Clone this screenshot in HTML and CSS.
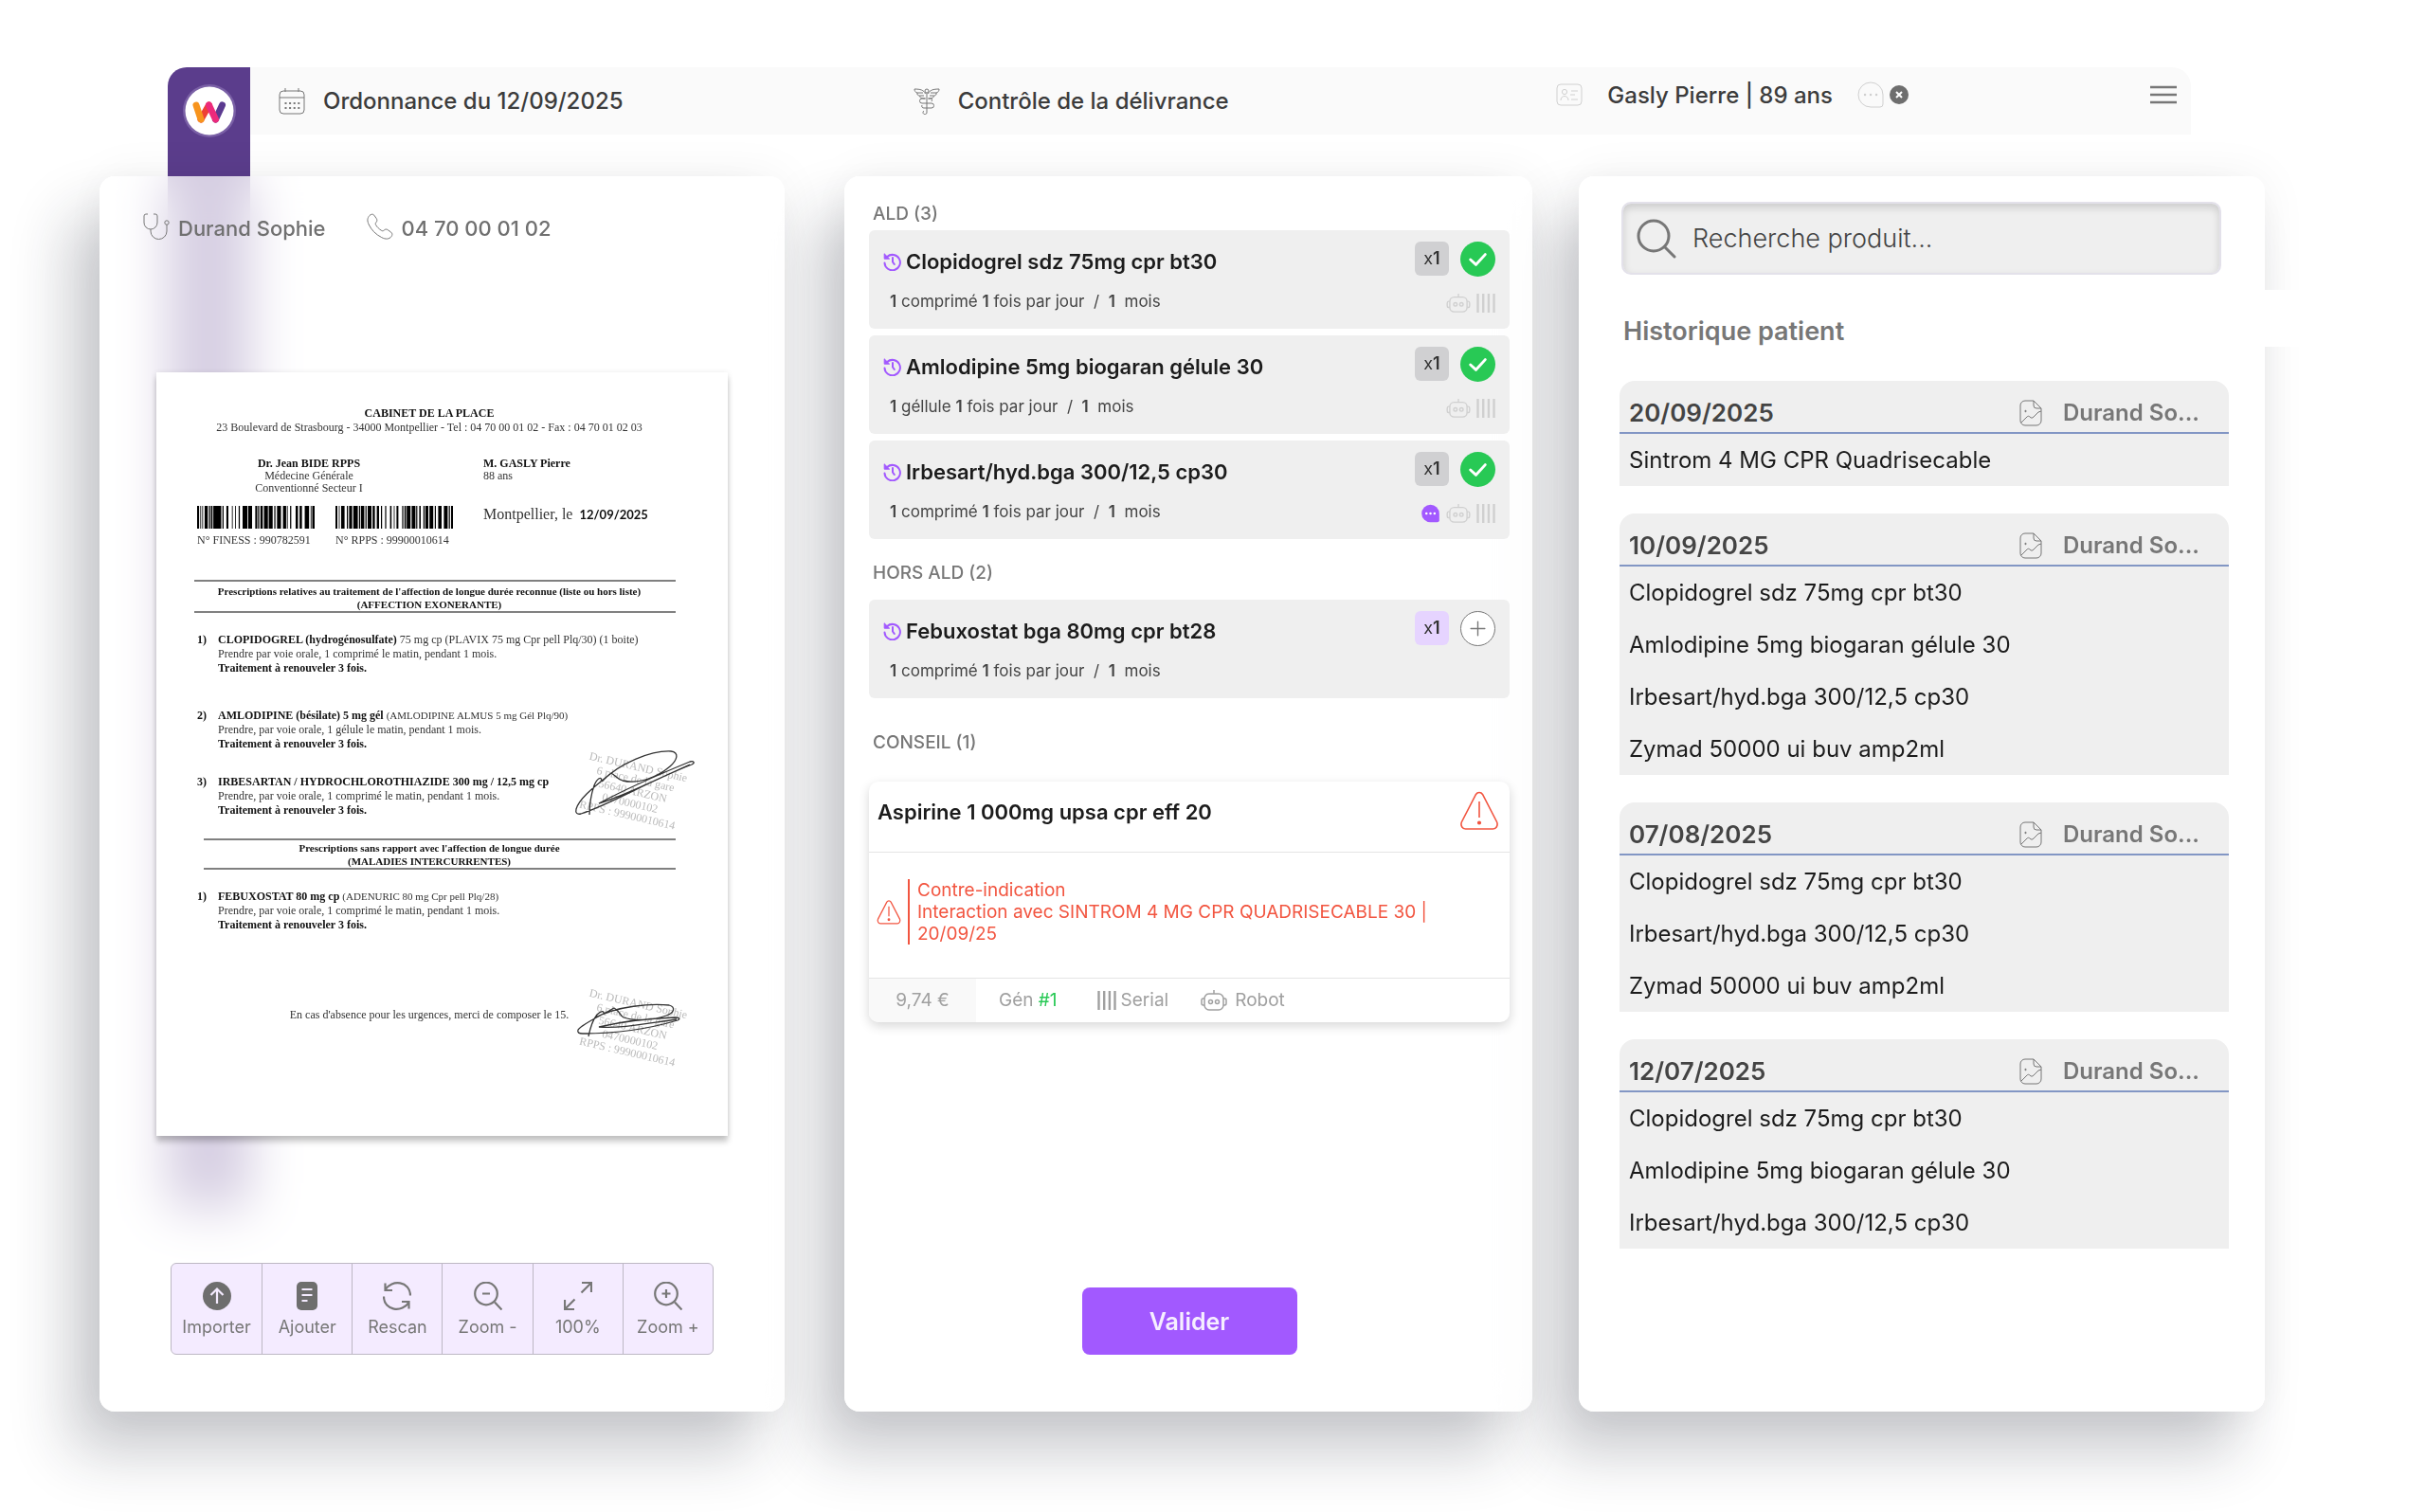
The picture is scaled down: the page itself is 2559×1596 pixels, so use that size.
FILE: index.html
```html
<!DOCTYPE html>
<html lang="fr">
<head>
  <meta charset="utf-8">
  <title>Contrôle de la délivrance</title>
  <link rel="stylesheet" href="styles.css">
</head>
<body>

  <!-- icons -->
  <svg class="sprite" aria-hidden="true">
    <symbol id="i-calendar" viewBox="0 0 28 28">
      <rect x="1" y="3" width="26" height="24" rx="4"/>
      <path d="M1 10h26M7 0v4M21 0v4"/>
      <path d="M6.500 16h16M6.500 21h16" stroke-dasharray="2 2.600" stroke-width="2"/>
    </symbol>
    <symbol id="i-caduceus" viewBox="0 0 28 28">
      <path d="M12.500 6C11 2 7 1 1 1c0 2 1 3.500 3 4-.5 1.500.5 3 2.500 3 0 2 2 3 6 3M15.500 6C17 2 21 1 27 1c0 2-1 3.500-3 4 .5 1.500-.5 3-2.500 3 0 2-2 3-6 3M4 5h6M6.500 8H11M24 5h-6M21.500 8H17"/>
      <circle cx="14" cy="3" r="2"/>
      <path d="M14 5v21M12.500 11H9a2.500 2.500 0 0 0 0 5h10a2.500 2.500 0 0 1 0 5h-8M15.500 11H19a2.500 2.500 0 0 1 0 3M9 18a2 2 0 0 0 2 3M11 24a2 2 0 1 0 3 2"/>
    </symbol>
    <symbol id="i-idcard" viewBox="0 0 28 24">
      <rect x="1" y="1" width="26" height="22" rx="4"/>
      <circle cx="9" cy="9" r="2.600"/>
      <path d="M5 18c0-6 8-6 8 0M16 8h7M15 12h5M16 17h7"/>
    </symbol>
    <symbol id="i-chat" viewBox="0 0 28 28">
      <path d="M14 1a13 13 0 1 0 0 26h10a3 3 0 0 0 3-3V14A13 13 0 0 0 14 1z"/>
      <path d="M8 14h.1M14 14h.1M20 14h.1" stroke-width="2.400" stroke-linecap="round"/>
    </symbol>
    <symbol id="i-chat-full" viewBox="0 0 28 28">
      <path d="M14 1a13 13 0 1 0 0 26h10a3 3 0 0 0 3-3V14A13 13 0 0 0 14 1z" fill="#a259ff" stroke="none"/>
      <path d="M8 14h.1M14 14h.1M20 14h.1" stroke="#fff" stroke-width="3.400" stroke-linecap="round"/>
    </symbol>
    <symbol id="i-stethoscope" viewBox="0 0 28 28">
      <path d="M5 1H3a2 2 0 0 0-2 2v7a7 7 0 0 0 14 0V3a2 2 0 0 0-2-2h-2M8 17v2a8.500 8.500 0 0 0 17 0v-7"/>
      <circle cx="25" cy="10" r="2.200"/>
    </symbol>
    <symbol id="i-phone" viewBox="0 0 28 28">
      <path d="M3 2.500C4.500 1 6.500.6 7.800 2.200l2.400 3.400c1 1.500.8 2.800-.2 4-1 1.100-1 1.900-.3 3 1.500 2.300 3.200 4 5.600 5.600 1.200.8 2 .8 3-.2 1.300-1.200 2.500-1.300 4-.3l3.400 2.500c1.600 1.200 1.500 3 .2 4.600-2.300 2.800-6 3-10.200.8C9.500 22.500 5 17.800 2.200 12 .2 8 .6 5 3 2.500z"/>
    </symbol>
    <symbol id="i-history" viewBox="0 0 20 20">
      <path d="M4.200 5A8.200 8.200 0 1 1 1.500 11.500M10 6v4.500l1.800 2.500" stroke-linecap="round"/>
      <path d="M1.200 1.800v5.400h5.400z" fill="currentColor" stroke-width="1" stroke-linejoin="round"/>
    </symbol>
    <symbol id="i-robot" viewBox="0 0 28 22">
      <rect x="4" y="4" width="20" height="17" rx="5"/>
      <path d="M14 0v4M4 9H2.500C1.500 9 1 9.700 1 11v3c0 1.300.5 2 1.500 2H4M24 9h1.500c1 0 1.500.7 1.500 2v3c0 1.300-.5 2-1.500 2H24"/>
      <circle cx="10.500" cy="12.500" r="2"/>
      <circle cx="17.500" cy="12.500" r="2"/>
    </symbol>
    <symbol id="i-bars" viewBox="0 0 20 20">
      <path d="M1.500 0v20M7.200 0v20M12.900 0v20M18.500 0v20" stroke-width="2.400"/>
    </symbol>
    <symbol id="i-warning" viewBox="0 0 42 42">
      <path d="M17.500 3.500c1.600-2.600 5.400-2.600 7 0l15 29c1.600 3.500-.5 7.500-4 7.500h-29C3 40 .9 36 2.500 32.500z"/>
      <path d="M21 11v17"/>
      <circle cx="21" cy="33.500" r="1.300" fill="currentColor"/>
    </symbol>
    <symbol id="i-search" viewBox="0 0 42 42">
      <circle cx="18" cy="18" r="16"/>
      <path d="M29.500 29.500L40 40" stroke-linecap="round"/>
    </symbol>
    <symbol id="i-file" viewBox="0 0 24 28">
      <path d="M15 1H6a5 5 0 0 0-5 5v16a5 5 0 0 0 5 5h12a5 5 0 0 0 5-5V9zM15 1v5a3 3 0 0 0 3 3h5"/>
      <path d="M2 24l6-6c1-1 2-1 3 0 1.500 1.500 2.500 1.500 4 0l5-5 3-1"/>
      <circle cx="6.500" cy="12" r=".7" fill="currentColor"/>
    </symbol>
  </svg>

  <div class="ribbon">
    <svg class="logo" viewBox="-28 -28 56 56" role="img" aria-label="Logo">
      <circle r="28" fill="#7a60a6"/>
      <circle r="25.500" fill="#fff"/>
      <g fill="none" stroke-width="7" stroke-linecap="round">
        <path d="M6.500 9L13.500-6" stroke="#5b3a90"/>
        <path d="M-9 9L-.5-6" stroke="#ee4036"/>
        <path d="M-14-6L-9 9" stroke="#f7941d"/>
        <path d="M-.5-6L6.500 9" stroke="#ec2a7b"/>
      </g>
    </svg>
  </div>

  <header class="topbar">
    <div class="topbar-title">
      <svg class="ico"><use href="#i-calendar"/></svg>
      <span>Ordonnance du 12/09/2025</span>
    </div>
    <h1 class="topbar-title">
      <svg class="ico"><use href="#i-caduceus"/></svg>
      <span>Contrôle de la délivrance</span>
    </h1>
    <div class="patient">
      <svg class="ico ico-pale"><use href="#i-idcard"/></svg>
      <span class="patient-name">Gasly Pierre | 89 ans</span>
      <svg class="ico ico-pale"><use href="#i-chat"/></svg>
      <button class="close" aria-label="Fermer">
        <svg viewBox="0 0 20 20"><path d="M7 7l6 6M13 7l-6 6"/></svg>
      </button>
    </div>
    <button class="burger" aria-label="Menu">
      <svg viewBox="0 0 28 20"><path d="M0 2h28M0 10h28M0 18h28"/></svg>
    </button>
  </header>

  <main class="columns">

    <!-- ordonnance -->
    <section class="panel panel-scan">
      <div class="contacts">
        <span class="contact"><svg class="ico"><use href="#i-stethoscope"/></svg>Durand Sophie</span>
        <span class="contact"><svg class="ico"><use href="#i-phone"/></svg>04 70 00 01 02</span>
      </div>

      <article class="paper">
        <div class="centered">
          <b>CABINET DE LA PLACE</b><br>
          23 Boulevard de Strasbourg - 34000 Montpellier - Tel : 04 70 00 01 02 - Fax : 04 70 01 02 03
        </div>
        <div class="people">
          <div>
            <p class="doctor"><b>Dr. Jean BIDE RPPS</b><br>Médecine Générale<br>Conventionné Secteur I</p>
            <div class="barcodes">
              <figure>
                <svg viewBox="143 0 297 24" preserveAspectRatio="none"><path d="M143 0h5v24h-5zM151 0h2v24h-2zM156 0h2v24h-2zM162 0h8v24h-8zM173 0h3v24h-3zM178 0h4v24h-4zM184 0h20v24h-20zM207 0h3v24h-3zM217 0h5v24h-5zM231 0h2v24h-2zM239 0h2v24h-2zM248 0h3v24h-3zM258 0h12v24h-12zM272 0h10v24h-10zM290 0h5v24h-5zM297 0h3v24h-3zM303 0h6v24h-6zM312 0h10v24h-10zM324 0h10v24h-10zM338 0h3v24h-3zM345 0h10v24h-10zM360 0h8v24h-8zM370 0h2v24h-2zM378 0h3v24h-3zM392 0h6v24h-6zM402 0h6v24h-6zM415 0h11v24h-11zM430 0h2v24h-2zM434 0h6v24h-6z"/></svg>
                <figcaption>N° FINESS : 990782591</figcaption>
              </figure>
              <figure>
                <svg viewBox="496 0 310 24" preserveAspectRatio="none"><path d="M496 0h5v24h-5zM505 0h2v24h-2zM511 0h9v24h-9zM526 0h3v24h-3zM532 0h8v24h-8zM543 0h12v24h-12zM558 0h3v24h-3zM563 0h9v24h-9zM575 0h3v24h-3zM581 0h10v24h-10zM594 0h6v24h-6zM605 0h6v24h-6zM616 0h3v24h-3zM627 0h3v24h-3zM640 0h4v24h-4zM650 0h2v24h-2zM657 0h5v24h-5zM672 0h3v24h-3zM678 0h4v24h-4zM684 0h10v24h-10zM697 0h10v24h-10zM709 0h3v24h-3zM717 0h4v24h-4zM728 0h3v24h-3zM733 0h8v24h-8zM744 0h10v24h-10zM758 0h3v24h-3zM767 0h9v24h-9zM782 0h10v24h-10zM795 0h3v24h-3zM801 0h5v24h-5z"/></svg>
                <figcaption>N° RPPS : 99900010614</figcaption>
              </figure>
            </div>
          </div>
          <div>
            <p class="small"><b>M. GASLY Pierre</b><br>88 ans</p>
            <p class="place">Montpellier, le <b>12/09/2025</b></p>
          </div>
        </div>

        <h3 class="rule">Prescriptions relatives au traitement de l'affection de longue durée reconnue (liste ou hors liste)<br>(AFFECTION EXONERANTE)</h3>
        <ol class="lines">
          <li class="wide"><b>CLOPIDOGREL (hydrogénosulfate)</b> 75 mg cp (PLAVIX 75 mg Cpr pell Plq/30) (1 boite)<br>Prendre par voie orale, 1 comprimé le matin, pendant 1 mois.<br><b>Traitement à renouveler 3 fois.</b></li>
          <li><b>AMLODIPINE (bésilate) 5 mg gél</b> <small>(AMLODIPINE ALMUS 5 mg Gél Plq/90)</small><br>Prendre, par voie orale, 1 gélule le matin, pendant 1 mois.<br><b>Traitement à renouveler 3 fois.</b></li>
          <li><b>IRBESARTAN / HYDROCHLOROTHIAZIDE 300 mg / 12,5 mg cp</b><br>Prendre, par voie orale, 1 comprimé le matin, pendant 1 mois.<br><b>Traitement à renouveler 3 fois.</b></li>
        </ol>
        <h3 class="rule rule-tight">Prescriptions sans rapport avec l'affection de longue durée<br>(MALADIES INTERCURRENTES)</h3>
        <ol class="lines">
          <li><b>FEBUXOSTAT 80 mg cp</b> <small>(ADENURIC 80 mg Cpr pell Plq/28)</small><br>Prendre, par voie orale, 1 comprimé le matin, pendant 1 mois.<br><b>Traitement à renouveler 3 fois.</b></li>
        </ol>
        <p class="centered urgent">En cas d'absence pour les urgences, merci de composer le 15.</p>

        <div class="stamp stamp-top">
          <p>Dr. DURAND Sophie<br>6 place de la gare<br>56640 ARZON<br>0470000102<br>RPPS : 99900010614</p>
          <svg viewBox="0 0 130 72"><path d="M18 69c0-12 2-22 5-31 3-7 8-11 8-4M31 34C50 14 84 1 104 2c9 1 7 9-1 16-14 12-34 19-50 15-6-2-8-6-12-8C28 36 8 50 4 63c-1 4 1 6 5 5C40 58 80 34 126 16c4-2 2-4-2-3C90 27 58 41 28 57c25-7 62-26 96-41"/></svg>
        </div>
        <div class="stamp stamp-bottom">
          <p>Dr. DURAND Sophie<br>6 place de la gare<br>56640 ARZON<br>0470000102<br>RPPS : 99900010614</p>
          <svg viewBox="0 0 130 72"><path d="M17 53c2-10 5-18 9-23 4-4 8-5 7 0M24 33c24-12 58-15 78-13 7 2 6 8-3 11-14 5-34 6-45 2-4-2-5-8-10-10C30 31 10 40 6 46c-1 3 1 4 5 4 32 0 66-4 100-14 4-2 1-3-3-3-28 1-54 4-80 10 22 2 52-4 82-8"/></svg>
        </div>
      </article>

      <div class="tools">
        <button><svg viewBox="0 0 30 30"><circle cx="15" cy="15" r="15" class="solid"/><path class="light" d="M15 23V8M8.500 14L15 7.500l6.500 6.500"/></svg>Importer</button>
        <button><svg viewBox="0 0 30 30"><rect x="4" y="0" width="22" height="30" rx="5" class="solid"/><path class="light" d="M9.500 8h11M9.500 14h11M9.500 20h6"/></svg>Ajouter</button>
        <button><svg viewBox="0 0 30 30"><path d="M2.500 1.500v7.500h7.500M2.500 8.500C9-3 29-1 29 14.500M27.500 28.500V21H20M27.500 21.500C21 33 1 31 1 15.500"/></svg>Rescan</button>
        <button><svg viewBox="0 0 30 30"><circle cx="13" cy="12.500" r="11.800"/><path d="M9 12.500h8M22 21.500l7.500 8"/></svg>Zoom -</button>
        <button><svg viewBox="0 0 30 30"><path d="M19 1h10v10M29 1L18.500 11.500M1 19v10h10M1 29l10.500-10.500"/></svg>100%</button>
        <button><svg viewBox="0 0 30 30"><circle cx="13" cy="12.500" r="11.800"/><path d="M8.500 12.500h9M13 8v9M22 21.500l7.500 8"/></svg>Zoom +</button>
      </div>
    </section>

    <!-- délivrance -->
    <section class="panel panel-delivery">
      <h2>ALD (3)</h2>
      <ul class="drugs">
        <li class="drug">
          <div>
            <h3><svg><use href="#i-history"/></svg>Clopidogrel sdz 75mg cpr bt30</h3>
            <p><b>1</b> comprimé <b>1</b> fois par jour &nbsp;/&nbsp; <b>1</b>&nbsp; mois</p>
          </div>
          <div>
            <div class="actions"><span class="qty">x<b>1</b></span><button class="check" aria-label="Validé"><svg viewBox="0 0 38 38"><path d="M11 19.500l6 5.500 10-11"/></svg></button></div>
            <div class="flags"><svg><use href="#i-robot"/></svg><svg class="bars"><use href="#i-bars"/></svg></div>
          </div>
        </li>
        <li class="drug">
          <div>
            <h3><svg><use href="#i-history"/></svg>Amlodipine 5mg biogaran gélule 30</h3>
            <p><b>1</b> géllule <b>1</b> fois par jour &nbsp;/&nbsp; <b>1</b>&nbsp; mois</p>
          </div>
          <div>
            <div class="actions"><span class="qty">x<b>1</b></span><button class="check" aria-label="Validé"><svg viewBox="0 0 38 38"><path d="M11 19.500l6 5.500 10-11"/></svg></button></div>
            <div class="flags"><svg><use href="#i-robot"/></svg><svg class="bars"><use href="#i-bars"/></svg></div>
          </div>
        </li>
        <li class="drug">
          <div>
            <h3><svg><use href="#i-history"/></svg>Irbesart/hyd.bga 300/12,5 cp30</h3>
            <p><b>1</b> comprimé <b>1</b> fois par jour &nbsp;/&nbsp; <b>1</b>&nbsp; mois</p>
          </div>
          <div>
            <div class="actions"><span class="qty">x<b>1</b></span><button class="check" aria-label="Validé"><svg viewBox="0 0 38 38"><path d="M11 19.500l6 5.500 10-11"/></svg></button></div>
            <div class="flags"><svg class="bubble"><use href="#i-chat-full"/></svg><svg><use href="#i-robot"/></svg><svg class="bars"><use href="#i-bars"/></svg></div>
          </div>
        </li>
      </ul>

      <h2 class="hors-ald">HORS ALD (2)</h2>
      <ul class="drugs">
        <li class="drug">
          <div>
            <h3><svg><use href="#i-history"/></svg>Febuxostat bga 80mg cpr bt28</h3>
            <p><b>1</b> comprimé <b>1</b> fois par jour &nbsp;/&nbsp; <b>1</b>&nbsp; mois</p>
          </div>
          <div>
            <div class="actions"><span class="qty qty-new">x<b>1</b></span><button class="check add" aria-label="Ajouter"><svg viewBox="0 0 38 38"><path d="M11 19h16M19 11v16"/></svg></button></div>
            <div class="flags"></div>
          </div>
        </li>
      </ul>

      <h2 class="conseil">CONSEIL (1)</h2>
      <article class="advice">
        <div class="advice-head">
          <h3>Aspirine 1 000mg upsa cpr eff 20</h3>
          <svg><use href="#i-warning"/></svg>
        </div>
        <div class="advice-body">
          <svg><use href="#i-warning"/></svg>
          <p>Contre-indication<br>Interaction avec SINTROM 4 MG CPR QUADRISECABLE 30 | 20/09/25</p>
        </div>
        <div class="advice-foot">
          <span class="price">9,74 €</span>
          <span>Gén <em>#1</em></span>
          <span class="with-icon"><svg class="bars"><use href="#i-bars"/></svg>Serial</span>
          <span class="with-icon robot"><svg><use href="#i-robot"/></svg>Robot</span>
        </div>
      </article>

      <button class="submit">Valider</button>
    </section>

    <!-- historique -->
    <section class="panel panel-history">
      <div class="search">
        <label for="search" aria-label="Recherche produit"><svg><use href="#i-search"/></svg></label>
        <input id="search" type="text" placeholder="Recherche produit...">
      </div>
      <h2>Historique patient</h2>

      <div class="entries">
        <article class="entry">
          <header><time>20/09/2025</time><svg><use href="#i-file"/></svg><span>Durand So...</span></header>
          <ul><li>Sintrom 4 MG CPR Quadrisecable</li></ul>
        </article>
        <article class="entry">
          <header><time>10/09/2025</time><svg><use href="#i-file"/></svg><span>Durand So...</span></header>
          <ul>
            <li>Clopidogrel sdz 75mg cpr bt30</li>
            <li>Amlodipine 5mg biogaran gélule 30</li>
            <li>Irbesart/hyd.bga 300/12,5 cp30</li>
            <li>Zymad 50000 ui buv amp2ml</li>
          </ul>
        </article>
        <article class="entry">
          <header><time>07/08/2025</time><svg><use href="#i-file"/></svg><span>Durand So...</span></header>
          <ul>
            <li>Clopidogrel sdz 75mg cpr bt30</li>
            <li>Irbesart/hyd.bga 300/12,5 cp30</li>
            <li>Zymad 50000 ui buv amp2ml</li>
          </ul>
        </article>
        <article class="entry">
          <header><time>12/07/2025</time><svg><use href="#i-file"/></svg><span>Durand So...</span></header>
          <ul>
            <li>Clopidogrel sdz 75mg cpr bt30</li>
            <li>Amlodipine 5mg biogaran gélule 30</li>
            <li>Irbesart/hyd.bga 300/12,5 cp30</li>
          </ul>
        </article>
      </div>
    </section>

  </main>
</body>
</html>
```
FILE: styles.css
```css
* {
  box-sizing: border-box;
}
body {
  margin: 0;
  min-height: 100vh;
  padding: 71px 0 106px;
  display: flex;
  flex-direction: column;
  background: #fff;
  color: #1c1c1c;
  font-family: Inter, "Liberation Sans", sans-serif;
  position: relative;
}
h1, h2, h3, p, ul, ol, figure {
  margin: 0;
  padding: 0;
  font-size: inherit;
  font-weight: inherit;
}
ul, ol {
  list-style: none;
}
button, input {
  font: inherit;
  color: inherit;
  padding: 0;
  border: none;
  background: none;
}
button {
  cursor: pointer;
}
svg {
  display: block;
  flex: none;
  fill: none;
  stroke: currentColor;
}
b {
  font-weight: 600;
}
.sprite {
  position: absolute;
  width: 0;
  height: 0;
}

/* purple ribbon, runs behind the first panel */
.ribbon {
  position: absolute;
  top: 71px;
  left: 177px;
  width: 87px;
  height: calc(100vh - 392px);
  padding-top: 18px;
  border-radius: 20px 0 0 0;
  background: #5b3d8c;
}
.logo {
  width: 56px;
  margin: 0 auto;
  stroke: none;
}

/* top bar */
.topbar {
  display: grid;
  grid-template-columns: 670fr 679fr 627fr auto;
  margin: 0 247px 44px 177px;
  padding: 0 15px 0 117px;
  height: 71px;
  background: #fafafa;
  border-radius: 20px 20px 0 0;
  color: #3c3c3c;
  font-size: 24px;
  font-weight: 500;
}
.topbar-title {
  display: flex;
  align-items: center;
  gap: 19px;
}
.ico {
  width: 28px;
  height: 28px;
  color: #777;
}
.ico-pale {
  color: #d0d0d0;
}
.patient {
  display: flex;
  align-items: center;
  height: 58px;
}
.patient-name {
  margin: 0 26px;
}
.close {
  width: 20px;
  height: 20px;
  margin-left: 6px;
  border-radius: 50%;
  background: #6e6e6e;
  color: #fff;
}
.close svg {
  stroke-width: 2;
}
.burger {
  width: 28px;
  height: 58px;
  color: #777;
}
.burger svg {
  stroke-width: 2.500;
}

/* panels */
.columns {
  flex: 1;
  display: grid;
  grid-template-columns: minmax(0, 723fr) minmax(0, 63fr) minmax(0, 726fr) minmax(0, 49fr) minmax(0, 724fr);
  margin: 0 169px 0 105px;
}
.panel {
  position: relative;
  display: flex;
  flex-direction: column;
  border-radius: 16px;
  background: rgba(255, 255, 255, .74);
  backdrop-filter: blur(28px);
  box-shadow: -30px 42px 64px rgba(30, 35, 50, .24), 0 0 50px rgba(0, 0, 0, .06);
}
.panel-scan {
  grid-column: 1;
  z-index: 3;
}
.panel-delivery {
  grid-column: 3;
  z-index: 2;
  padding: 28px 24px 60px 26px;
}
.panel-history {
  grid-column: 5;
  padding: 27px 38px 60px 43px;
}

.contacts {
  display: flex;
  gap: 43px;
  padding: 39px 46px 0;
  color: #707070;
  font-size: 22px;
  line-height: 32px;
  font-weight: 500;
}
.contact {
  display: flex;
  gap: 9px;
}

/* scanned prescription */
.paper {
  position: relative;
  margin: 136px 60px 0;
  padding: 36px 55px 120px 40px;
  background: #fff;
  box-shadow: 0 6px 6px rgba(0, 0, 0, .22), 0 0 6px rgba(0, 0, 0, .08);
  font-family: "Liberation Serif", serif;
  font-size: 12px;
  line-height: 15px;
  color: #333;
}
.paper b {
  color: #111;
  font-weight: 700;
}
.centered {
  padding-right: 12px;
  text-align: center;
  white-space: nowrap;
}
.people {
  display: grid;
  grid-template-columns: 305px 1fr;
  margin-top: 24px;
}
.doctor {
  width: 242px;
  text-align: center;
  line-height: 13px;
}
.small {
  line-height: 13px;
}
.barcodes {
  display: flex;
  gap: 22px;
  padding: 12px 0 0 3px;
}
.barcodes svg {
  width: 124px;
  height: 24px;
  margin-bottom: 5px;
  fill: #000;
  stroke: none;
}
.barcodes figcaption {
  white-space: nowrap;
}
.place {
  margin-top: 24px;
  font-size: 16px;
  line-height: 20px;
  white-space: nowrap;
}
.place b {
  margin-left: 3px;
  font-family: Lato, sans-serif;
  font-size: 13px;
}
.rule {
  margin-top: 34px;
  padding: 3px 12px 0 0;
  border: solid #808080;
  border-width: 2px 0;
  color: #111;
  font-size: 11px;
  line-height: 14px;
  font-weight: 700;
  text-align: center;
  white-space: nowrap;
}
.rule-tight {
  margin: 22px 0 0 10px;
  padding-top: 1px;
  padding-right: 22px;
}
.lines {
  margin-top: 21px;
  padding-left: 25px;
  counter-reset: line;
}
.lines li {
  counter-increment: line;
  margin-bottom: 25px;
  white-space: nowrap;
}
.lines li.wide {
  margin-bottom: 35px;
}
.lines li:last-child {
  margin-bottom: 0;
}
.lines li::before {
  content: counter(line) ")";
  float: left;
  margin-left: -22px;
  color: #111;
  font-weight: 700;
}
.lines small {
  font-size: 11px;
}
.urgent {
  margin-top: 80px;
}
.stamp {
  position: absolute;
  right: 34px;
  width: 130px;
  height: 72px;
  color: #bbb;
  font-size: 12px;
  line-height: 13px;
}
.stamp-top {
  top: 398px;
}
.stamp-bottom {
  top: 648px;
}
.stamp p {
  padding-top: 12px;
  text-align: center;
  transform: rotate(13deg);
}
.stamp svg {
  position: absolute;
  inset: 0;
  color: #333;
  stroke-width: 1.300;
}

.tools {
  display: grid;
  grid-template-columns: repeat(6, 1fr);
  margin: auto 75px 60px;
  border: 1px solid #bdb8c4;
  border-radius: 6px;
  background: #f4ebff;
}
.tools button {
  display: flex;
  flex-direction: column;
  align-items: center;
  gap: 7px;
  padding: 19px 0 17px;
  color: #777;
  font-size: 18px;
  line-height: 22px;
}
.tools button + button {
  border-left: 1px solid #bdb8c4;
}
.tools svg {
  width: 30px;
  height: 30px;
  stroke-width: 2.200;
}
.tools .solid {
  fill: #6e6e6e;
  stroke: none;
}
.tools .light {
  stroke: #f4ebff;
}

/* delivery */
.panel-delivery h2 {
  margin-bottom: 5px;
  padding-left: 4px;
  color: #777;
  font-size: 19px;
  line-height: 24px;
  font-weight: 500;
}
.panel-delivery .hors-ald {
  margin: 24px 0 16px;
}
.panel-delivery .conseil {
  margin: 35px 0 29px;
}
.drugs {
  display: grid;
  gap: 7px;
}
.drug {
  display: flex;
  justify-content: space-between;
  padding: 12px 15px 17px;
  border-radius: 6px;
  background: #efefef;
}
.drug h3 {
  display: flex;
  align-items: center;
  gap: 4px;
  margin-top: 7px;
  font-size: 22px;
  line-height: 28px;
  font-weight: 600;
}
.drug h3 svg {
  width: 20px;
  height: 20px;
  color: #a259ff;
  stroke-width: 2;
}
.drug p {
  margin-top: 17px;
  padding-left: 7px;
  color: #444;
  font-size: 17px;
  line-height: 22px;
}
.actions {
  display: flex;
  justify-content: flex-end;
  gap: 12px;
}
.qty {
  width: 36px;
  height: 36px;
  border-radius: 6px;
  background: #d0d0d2;
  color: #333;
  font-size: 18px;
  line-height: 36px;
  text-align: center;
}
.qty-new {
  background: #e6d4ff;
}
.check {
  width: 37px;
  height: 37px;
  border-radius: 50%;
  background: #28c955;
  color: #fff;
}
.check svg {
  stroke-width: 3;
  stroke-linecap: round;
  stroke-linejoin: round;
}
.add {
  border: 1px solid #777;
  background: #fff;
  color: #777;
}
.add svg {
  stroke-width: 1.500;
}
.flags {
  display: flex;
  justify-content: flex-end;
  gap: 6px;
  height: 20px;
  margin-top: 18px;
  color: #d0d0d0;
}
.flags svg {
  width: 26px;
  height: 20px;
  stroke-width: 1.500;
}
.flags .bars, .advice .bars {
  width: 20px;
}
.flags .bubble {
  width: 21px;
}

.advice {
  border-radius: 10px;
  background: #fff;
  box-shadow: 0 4px 12px rgba(0, 0, 0, .16);
}
.advice-head {
  display: flex;
  justify-content: space-between;
  padding: 10px 11px 10px 9px;
  height: 75px;
  border-bottom: 1px solid #e4e4e4;
}
.advice-head h3 {
  font-size: 22px;
  line-height: 44px;
  font-weight: 600;
}
.advice-head svg {
  width: 42px;
  height: 42px;
  color: #f25540;
  stroke-width: 1.600;
}
.advice-body {
  display: flex;
  align-items: center;
  gap: 7px;
  padding: 28px 72px 35px 8px;
  color: #f25540;
  font-size: 19px;
  line-height: 23px;
}
.advice-body svg {
  width: 26px;
  height: 26px;
  stroke-width: 2;
}
.advice-body p {
  padding-left: 8px;
  border-left: 2px solid #f25540;
}
.advice-foot {
  display: flex;
  align-items: center;
  border-top: 1px solid #e4e4e4;
  color: #a0a0a0;
  font-size: 19px;
  line-height: 46px;
}
.advice-foot em {
  color: #28c955;
  font-style: normal;
}
.price {
  width: 113px;
  margin-right: 24px;
  border-radius: 0 0 0 10px;
  background: #f9f9f9;
  text-align: center;
}
.with-icon {
  display: flex;
  align-items: center;
  gap: 5px;
  margin-left: 42px;
}
.with-icon.robot {
  gap: 8px;
  margin-left: 34px;
}
.with-icon svg {
  width: 28px;
  height: 22px;
  stroke-width: 1.500;
}
.submit {
  align-self: center;
  width: 227px;
  height: 71px;
  margin-top: auto;
  border-radius: 8px;
  background: #a259ff;
  color: #f6eeff;
  font-size: 25px;
  font-weight: 600;
}

/* history */
.search {
  display: flex;
  align-items: center;
  gap: 17px;
  height: 77px;
  margin: 0 8px 16px 2px;
  padding: 0 16px 0 14px;
  border: 2px solid #e3e1ea;
  border-radius: 10px;
  background: #efefef;
  box-shadow: inset 0 4px 8px rgba(0, 0, 0, .15);
}
.search svg {
  width: 42px;
  height: 42px;
  color: #777;
  stroke-width: 3;
}
.search input {
  flex: 1;
  min-width: 0;
  outline: none;
  font-size: 27px;
  font-weight: 300;
}
.search input::placeholder {
  color: #444;
  opacity: 1;
}
/* white band reaches over the panel's shadow */
.panel-history h2 {
  margin: 0 -74px 36px 0;
  padding: 28px 0 0 4px;
  background: #fff;
  color: #777;
  font-size: 27px;
  line-height: 32px;
  font-weight: 600;
}
.entries {
  display: grid;
  gap: 29px;
}
.entry {
  border-radius: 16px 16px 0 0;
  background: #efefef;
}
.entry header {
  display: flex;
  align-items: center;
  padding: 13px 31px 0 10px;
  height: 56px;
  border-bottom: 2px solid #8296c4;
  color: #777;
  font-size: 24px;
  font-weight: 600;
}
.entry time {
  margin-right: auto;
  color: #444;
  font-size: 26px;
}
.entry svg {
  width: 24px;
  height: 28px;
  margin-right: 22px;
}
.entry li {
  padding: 0 10px;
  font-size: 24px;
  line-height: 55px;
}
```
